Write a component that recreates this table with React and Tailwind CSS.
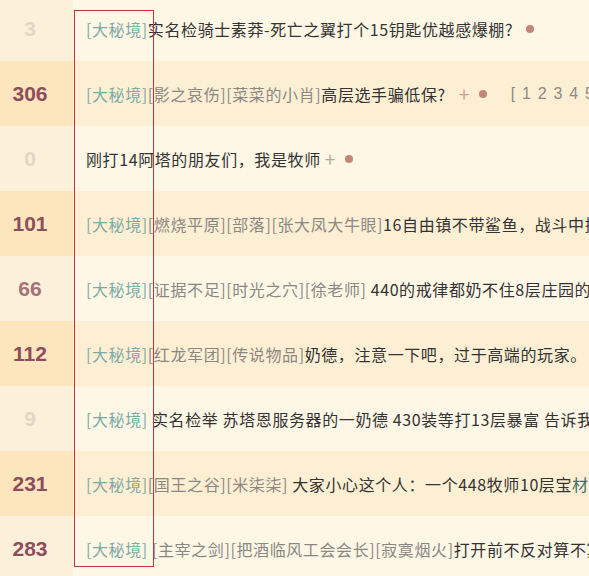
import React from 'react';

const rows = [
  { n: '3', tone: 'faint', tags: [], title: '实名检骑士素莽-死亡之翼打个15钥匙优越感爆棚?', dot: true },
  { n: '306', tone: 'hot', tags: ['[影之哀伤]', '[菜菜的小肖]'], title: '高层选手骗低保?', plus: true, dot: true, pages: true },
  { n: '0', tone: 'faint', noTag: true, tags: [], title: '刚打14阿塔的朋友们，我是牧师', plus: true, dot: true, tight: true },
  { n: '101', tone: 'hot', tags: ['[燃烧平原]', '[部落]', '[张大凤大牛眼]'], title: '16自由镇不带鲨鱼，战斗中掉线还怪我' },
  { n: '66', tone: 'warm', tags: ['[证据不足]', '[时光之穴]', '[徐老师]'], title: ' 440的戒律都奶不住8层庄园的治疗' },
  { n: '112', tone: 'hot', tags: ['[红龙军团]', '[传说物品]'], title: '奶德，注意一下吧，过于高端的玩家。' },
  { n: '9', tone: 'faint', tags: [], title: ' 实名检举 苏塔恩服务器的一奶德 430装等打13层暴富 告诉我' },
  { n: '231', tone: 'hot', tags: ['[国王之谷]', '[米柒柒]'], title: ' 大家小心这个人：一个448牧师10层宝', tail: '材' },
  { n: '283', tone: 'hot', tags: [' [主宰之剑]', '[把酒临风工会会长]', '[寂寞烟火]'], title: '打开前不反对算不算' },
];

const toneClass = {
  hot: 'text-[#8e4d5d]',
  warm: 'text-[#a7707a]',
  faint: 'text-[#e3d6c6]',
};

export default function App() {
  return (
    <div
      className="relative w-[589px] h-[576px] overflow-hidden bg-[#fef7e6]"
      style={{ fontFamily: '"Noto Sans CJK SC", "Noto Sans", sans-serif' }}
    >
      <div className="-mt-[4px]">
        {rows.map((r, i) => {
          const even = i % 2 === 1;
          return (
            <div
              key={i}
              className={`flex h-[65px] ${even ? 'bg-[#fdefd3]' : 'bg-[#fef7e6]'}`}
            >
              <div
                className={`w-[73px] shrink-0 flex items-center justify-center pr-[13px] ${even ? 'bg-[#fde5bd]' : 'bg-[#fdf0db]'}`}
              >
                <span
                  className={`text-[21px] font-bold ${toneClass[r.tone]}`}
                  style={{ fontFamily: '"Liberation Sans", Arial, sans-serif' }}
                >
                  {r.n}
                </span>
              </div>
              <div className="flex-1 min-w-0 flex items-center pl-[13px] whitespace-nowrap overflow-hidden text-[16px] tracking-[0.6px]">
                {!r.noTag && <span className="shrink-0 text-[#7eaaa5]">[大秘境]</span>}
                {r.tags.map((t, j) => (
                  <span key={j} className="shrink-0 text-[#8b8884] whitespace-pre">{t}</span>
                ))}
                <span className="shrink-0 text-[#333333] whitespace-pre">{r.title}</span>
                {r.tail && <span className="shrink-0 text-[#3d6e6c]">{r.tail}</span>}
                {r.plus && (
                  <span className={`shrink-0 ${r.tight ? 'ml-[4px]' : 'ml-[13px]'} text-[#c4a493] text-[19px] leading-none`}>+</span>
                )}
                {r.dot && (
                  <span className={`shrink-0 ${r.plus ? 'ml-[9px]' : 'ml-[13px]'} inline-block w-[8px] h-[8px] rounded-full bg-[#c3877a]`} />
                )}
                {r.pages && (
                  <span
                    className="shrink-0 ml-[24px] text-[#8d8a86] text-[16px] tracking-[1.2px] whitespace-pre"
                    style={{ fontFamily: '"Liberation Sans", Arial, sans-serif' }}
                  >
                    [ 1 2 3 4 5 6
                  </span>
                )}
              </div>
            </div>
          );
        })}
      </div>
      <div className="absolute left-[74px] top-[10px] w-[80px] h-[557px] border border-[#c5323a]" />
    </div>
  );
}
